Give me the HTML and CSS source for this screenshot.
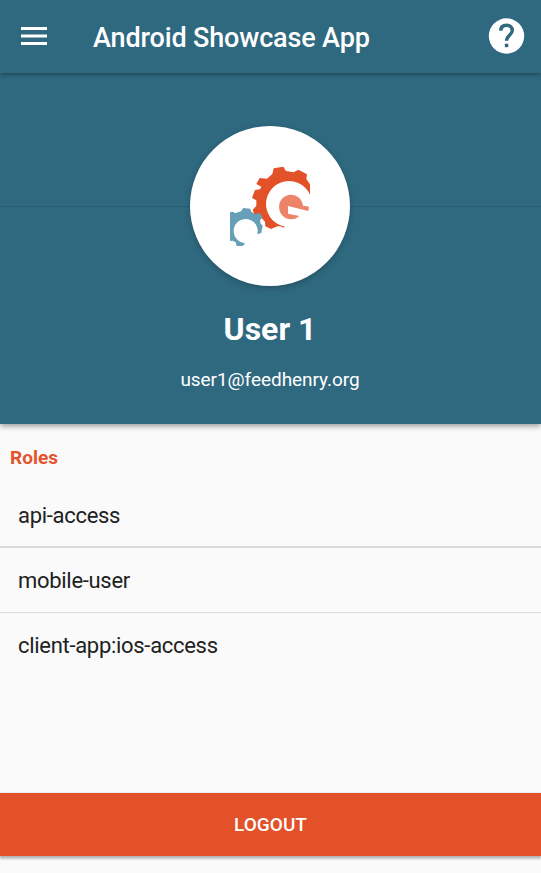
FILE: index.html
```html
<!DOCTYPE html>
<html lang="en">
<head>
<meta charset="utf-8">
<title>Android Showcase App</title>
<link rel="stylesheet" href="styles.css">
</head>
<body>
<header class="toolbar">
  <svg class="menu-icon" viewBox="3 6 18 12" preserveAspectRatio="none"><path d="M3 18h18v-2H3v2zm0-5h18v-2H3v2zm0-7v2h18V6H3z"/></svg>
  <h1 class="title">Android Showcase App</h1>
  <svg class="help-icon" viewBox="0 0 35 36">
    <circle cx="17.500" cy="18" r="17.700"/>
    <path class="mark" d="M11.800 12.800C11.800 8.900 14.200 7.300 17.500 7.300S23.300 9.200 23.300 12.500C23.300 16.900 17.600 17.200 17.600 22.800"/>
    <path class="dot" d="M15.800 25.700h3.500v3.500h-3.500z"/>
  </svg>
</header>
<section class="profile">
  <div class="avatar">
    <svg class="logo" viewBox="0 0 300 300">
      <path fill="#e35128" d="M161 40L190 35L198 48L221 52L235 44L261 58L259 72L270 88V119L207 147L193 218L180 214L172 214L153 222L136 214L135 200L122 186L105 185L98 164L109 153V136L96 128L105 105L120 103L124 95L109 87L119 69L141 71L157 57Z"/>
      <circle cx="207" cy="147" r="69" fill="#fff"/>
      <path fill="#ed8469" d="M204 153L265 168L267 155L249 152A36 37 0 1 0 214 193C224 193 232 189 238 183L204 176Z"/>
      <path fill="#679fb6" d="M30 172L38 170L46 175L64 168L69 159L91 161L94 170L104 177L119 174L128 187L120 196L122 207L128 211L124 234L111 238L105 245L77 228L74 262L73 269L67 273H50L47 262L38 257L30 258Z"/>
      <circle cx="77" cy="228" r="36" fill="#fff"/>
    </svg>
  </div>
  <h2 class="name">User 1</h2>
  <p class="email">user1@feedhenry.org</p>
</section>
<main class="roles">
  <h3 class="roles-title">Roles</h3>
  <ul class="role-list">
    <li>api-access</li>
    <li>mobile-user</li>
    <li>client-app:ios-access</li>
  </ul>
</main>
<button class="logout">LOGOUT</button>
</body>
</html>
```
FILE: styles.css
```css
* { box-sizing: border-box; }
body {
  margin: 0;
  height: 873px;
  overflow: hidden;
  display: flex;
  flex-direction: column;
  background: #fafafa;
  color: #212121;
  font-family: Roboto, sans-serif;
}
h1, h2, h3, p, ul { margin: 0; padding: 0; }
.toolbar {
  position: relative;
  height: 73px;
  flex: none;
  display: flex;
  align-items: center;
  padding: 0 17px 2px 21px;
  background: #2f697f;
  color: #fff;
  box-shadow: 0 1px 5px rgba(0, 0, 0, .4);
}
.menu-icon { width: 26px; height: 18px; fill: #fff; }
.title { margin-left: 46px; font-size: 27px; line-height: 36px; font-weight: 500; letter-spacing: -.15px; padding-top: 5px; white-space: nowrap; }
.help-icon { width: 35px; height: 36px; margin-left: auto; fill: #fff; overflow: visible; }
.help-icon .mark { fill: none; stroke: #2f697f; stroke-width: 3.400; }
.help-icon .dot { fill: #2f697f; }
.profile {
  height: 351px;
  flex: none;
  display: flex;
  flex-direction: column;
  align-items: center;
  padding: 53px 1px 0 0;
  color: #fff;
  background: linear-gradient(#2a5d71, #2a5d71) 0 133px / 100% 1px no-repeat #2f697f;
  box-shadow: 0 2px 6px rgba(0, 0, 0, .4);
}
.avatar {
  width: 160px;
  height: 160px;
  flex: none;
  border-radius: 50%;
  background: #fff;
  padding: 29px 30px;
  box-shadow: 0 2px 6px rgba(0, 0, 0, .22);
}
.logo { display: block; width: 100px; height: 100px; }
.name { margin-top: 23px; font-size: 32px; line-height: 40px; font-weight: 700; }
.email { margin-top: 19px; font-size: 19px; line-height: 24px; letter-spacing: -.05px; }
.roles { flex: none; height: 369px; }
.roles-title { padding: 22px 0 0 10px; font-size: 19px; line-height: 24px; font-weight: 700; color: #e5532c; }
.role-list { list-style: none; padding-top: 12px; }
.role-list li { display: flex; align-items: center; height: 65px; padding-left: 18px; font-size: 22px; letter-spacing: -.3px; border-bottom: 1px solid #dadada; }
.role-list li:first-child { height: 66px; padding-top: 2px; border-bottom-width: 2px; }
.role-list li:last-child { height: 65px; border: 0; }
.logout {
  flex: none;
  height: 63px;
  border: 0;
  padding: 0;
  background: #e35128;
  color: #fff;
  font: 500 19px Roboto, sans-serif;
  box-shadow: 0 3px 2px rgba(0, 0, 0, .24), 0 0 1px rgba(0, 0, 0, .3);
}
```
